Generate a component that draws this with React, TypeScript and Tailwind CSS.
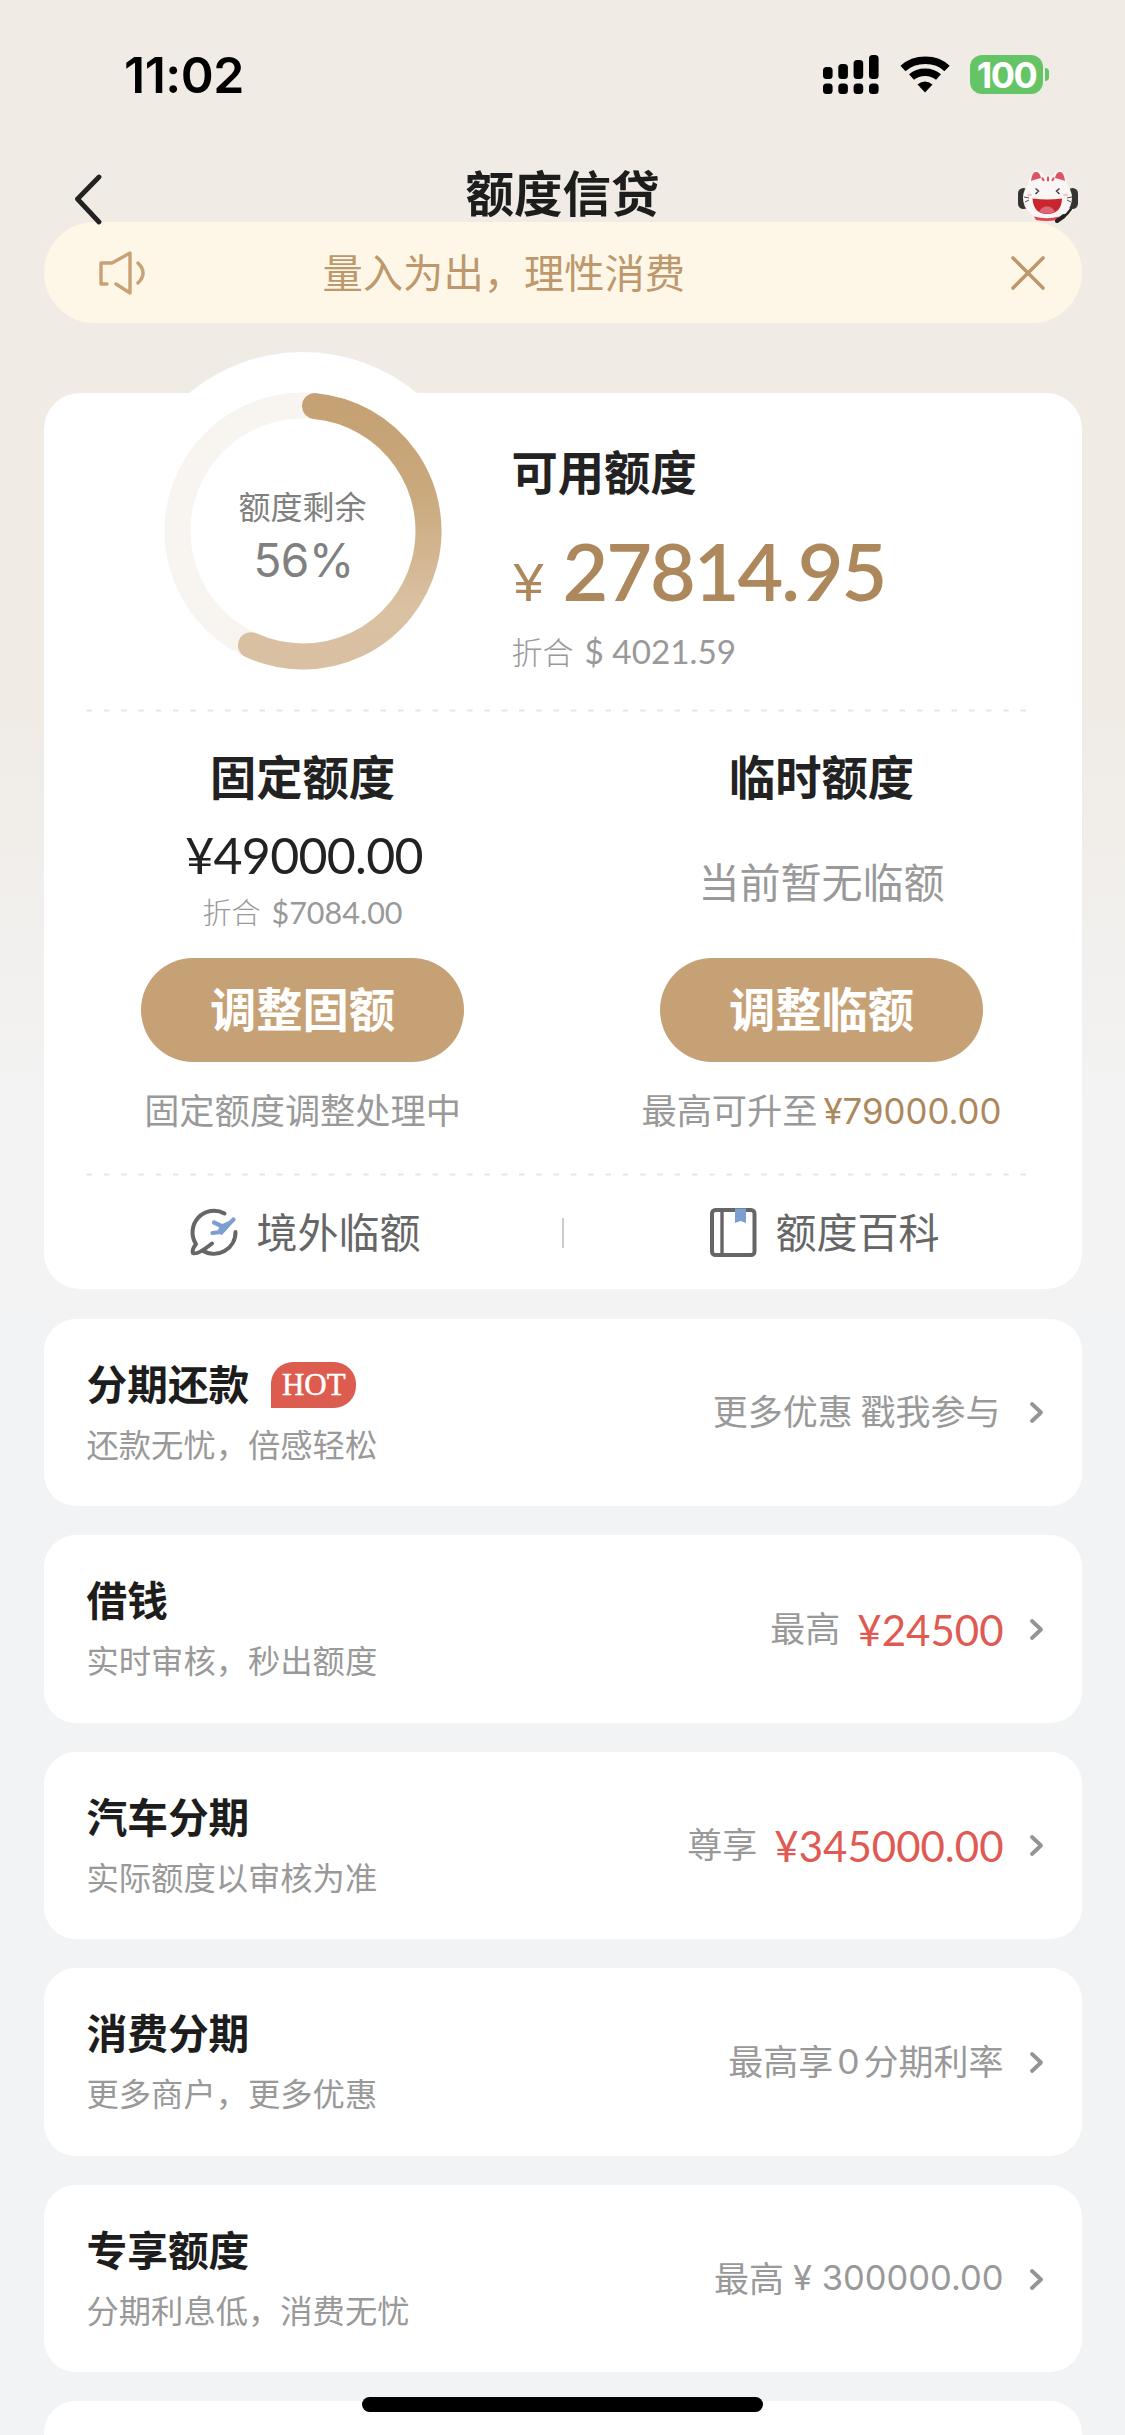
import React from "react";

const CJK = "font-['Noto_Sans_CJK_SC',sans-serif]";
const NUM = "font-['Lato','Noto_Sans_CJK_SC',sans-serif]";

function StatusBar() {
  return (
    <div className="flex h-[150px] items-start justify-between pl-[124px] pr-[76px] pt-[51px]">
      <div className="font-['Inter',sans-serif] text-[50px] font-semibold leading-[48px] tracking-[-0.500px] text-black">
        11:02
      </div>
      <div className="flex items-start pt-[4px]">
        <svg width="58" height="40" viewBox="0 0 58 40" className="mr-[20px]">
          <rect x="1" y="12" width="9.600" height="12" rx="3.500" />
          <rect x="16.300" y="9" width="9.600" height="15" rx="3.500" />
          <rect x="31.600" y="5" width="9.600" height="19" rx="3.500" />
          <rect x="47" y="0" width="9.600" height="24" rx="3.500" />
          <rect x="1" y="28.500" width="9.600" height="10.500" rx="3.500" />
          <rect x="16.300" y="28.500" width="9.600" height="10.500" rx="3.500" />
          <rect x="31.600" y="28.500" width="9.600" height="10.500" rx="3.500" />
          <rect x="47" y="28.500" width="9.600" height="10.500" rx="3.500" />
        </svg>
        <svg width="50" height="40" viewBox="0 0 50 40" className="mr-[20px]" fill="none" stroke="#000">
          <path d="M3 13.500C15 2.500 36 2.500 47 13.500" strokeWidth="7.500" />
          <path d="M11.500 22C19 15.500 31 15.500 38.500 22" strokeWidth="7.500" />
          <path d="M25 37.500L17.500 29.500Q25 23.500 32.500 29.500Z" fill="#000" stroke="none" />
        </svg>
        <div className="flex h-[39px] w-[73px] items-center justify-center rounded-[12px] bg-[#65c466] font-['Inter',sans-serif] text-[36px] font-bold leading-none tracking-[-1.500px] text-white">
          100
        </div>
        <div className="ml-[2px] mt-[13px] h-[13px] w-[4px] rounded-r-full bg-[#65c466]" />
      </div>
    </div>
  );
}

function Mascot() {
  return (
    <svg width="62" height="54" viewBox="0 0 62 54">
      <path d="M45 49Q56 42 57 30" stroke="#222" strokeWidth="2.500" fill="none" />
      <rect x="1" y="19" width="11" height="21" rx="5.500" fill="#333" />
      <rect x="50" y="19" width="11" height="21" rx="5.500" fill="#333" />
      <path d="M11 18Q13 1 19 1Q25 1 27 7Q31 6 36 7Q38 1 43 1Q49 1 50 18Z" fill="#faf6f5" />
      <ellipse cx="30.500" cy="29" rx="24.500" ry="22" fill="#faf6f5" />
      <path d="M14 12Q15 2 20 3Q23 4 24 9Q19 10 14 12Z" fill="#dd5264" />
      <path d="M48 12Q47 2 42 3Q39 4 38 9Q43 10 48 12Z" fill="#dd5264" />
      <path d="M31 8.500V11.500M25.500 9.500L26.500 11M36.500 9.500L35.500 11" stroke="#dd5264" strokeWidth="2.200" strokeLinecap="round" />
      <path d="M18.500 19.500L21.500 22L18.500 25M42.500 19.500L39.500 22L42.500 25" stroke="#444" strokeWidth="1.500" fill="none" />
      <path d="M7 28L12 29M8 33L12 31M55 28L50 29M54 33L50 31" stroke="#555" strokeWidth="1" />
      <ellipse cx="12.500" cy="26" rx="2.500" ry="1.300" fill="#f6c6cc" />
      <ellipse cx="48.500" cy="26" rx="2.500" ry="1.300" fill="#f6c6cc" />
      <path d="M15.500 29.500Q30 31.500 45 29.500Q44.500 45 30 45Q16.500 45 15.500 29.500Z" fill="#c9252d" />
      <path d="M22 43Q25 37 30 37.500Q35 37 38 43Q30 46.500 22 43Z" fill="#dd6677" />
      <path d="M17 47.500Q30 51 42 47.500L40 51Q30 53 19 51Z" fill="#dd4a55" />
      <path d="M40 52L47 47" stroke="#222" strokeWidth="4" strokeLinecap="round" />
    </svg>
  );
}

function Header() {
  return (
    <div className="flex h-[72px] items-start justify-between pl-[72px] pr-[46px]">
      <svg width="34" height="52" viewBox="0 0 34 52" className="mt-[23px]" fill="none">
        <path d="M27 4L5.500 26L27 49" stroke="#222" strokeWidth="4.800" strokeLinecap="round" strokeLinejoin="round" />
      </svg>
      <h1 className={`${CJK} ml-[2px] mt-[6px] text-[48.500px] font-bold leading-[70px] text-[#1d1d1d]`}>额度信贷</h1>
      <div className="mt-[19px]">
        <Mascot />
      </div>
    </div>
  );
}

function Notice() {
  return (
    <div className="flex h-[101px] items-center rounded-full bg-[#fef7e8] pl-[55px] pr-[36px]">
      <svg width="48" height="44" viewBox="0 0 48 44" fill="none" stroke="#c8a274" strokeWidth="3.400" strokeLinejoin="round" strokeLinecap="round">
        <path d="M8 33H2V12H13L31 2V42L17 33" />
        <path d="M39 12Q49 22 39 32" />
      </svg>
      <div className={`${CJK} -mt-[3px] ml-[176px] flex-1 text-[40.300px] leading-[60px] text-[#bd986c]`}>量入为出，理性消费</div>
      <svg width="36" height="36" viewBox="0 0 36 36" stroke="#bd986c" strokeWidth="3.600" strokeLinecap="round">
        <path d="M3 3L33 33M33 3L3 33" />
      </svg>
    </div>
  );
}

function Dashes() {
  return (
    <svg width="942" height="3" className="ml-[42px] block">
      <path d="M0.500 1.500H940" stroke="#e6e6e6" strokeWidth="2" strokeDasharray="5.500 11.800" />
    </svg>
  );
}

function Gauge() {
  const r = 125.5;
  const at = (deg: number) => {
    const a = (deg * Math.PI) / 180;
    return `${160 + r * Math.sin(a)} ${179 - r * Math.cos(a)}`;
  };
  return (
    <svg width="320" height="340" viewBox="0 0 320 340" className="absolute left-[99px] top-[-41px]">
      <defs>
        <linearGradient id="ring" x1="0" y1="0" x2="0" y2="1">
          <stop offset="0" stopColor="#c5a173" />
          <stop offset="0.350" stopColor="#caa97d" />
          <stop offset="0.800" stopColor="#dac1a2" />
          <stop offset="1" stopColor="#d9c0a2" />
        </linearGradient>
      </defs>
      <circle cx="160" cy="179" r="179" fill="#fff" />
      <circle cx="160" cy="179" r={r} fill="none" stroke="#f8f5f0" strokeWidth="26" />
      <path
        d={`M${at(5.5)}A${r} ${r} 0 1 1 ${at(204.5)}`}
        fill="none"
        stroke="url(#ring)"
        strokeWidth="26"
        strokeLinecap="round"
      />
    </svg>
  );
}

function QuotaCard() {
  return (
    <section className="relative h-[896px] rounded-[36px] bg-white">
      <Gauge />
      <div className="relative flex h-[316px]">
        <div className={`${CJK} w-[468px] pl-[50px] pt-[89px] text-center`}>
          <div className="text-[32px] leading-[46px] text-[#808080]">额度剩余</div>
          <div className="ml-[2px] mt-[7px] font-['Inter',sans-serif] text-[46px] leading-[50px] tracking-[-0.500px] text-[#808080]">56%</div>
        </div>
        <div className="pt-[43px]">
          <h2 className={`${CJK} text-[46.300px] font-bold leading-[68px] text-[#222]`}>可用额度</h2>
          <div className="mt-[19px] flex h-[96px] items-baseline text-[#ad885c]">
            <span className="ml-[2px] font-['Liberation_Sans',sans-serif] text-[54px] leading-[96px]">¥</span>
            <span className={`${NUM} ml-[19px] text-[79px] font-semibold leading-[96px] tracking-[-2.100px]`}>27814.95</span>
          </div>
          <div className="mt-[10px] flex h-[44px] items-baseline text-[#999]">
            <span className={`${CJK} text-[31px] font-light leading-[44px]`}>折合</span>
            <span className={`${NUM} ml-[11px] text-[33.300px] leading-[44px]`}>$ 4021.59</span>
          </div>
        </div>
      </div>
      <Dashes />
      <div className="flex h-[461px]">
        <div className="flex w-[518px] flex-col items-center">
          <h3 className={`${CJK} mt-[29px] text-[46.300px] font-bold leading-[68px] text-[#222]`}>固定额度</h3>
          <div className={`${NUM} ml-[3px] mt-[16px] h-[60px] text-[50px] leading-[60px] tracking-[-0.700px] text-[#222]`}>¥49000.00</div>
          <div className="mt-[4px] flex h-[44px] items-baseline text-[#999]">
            <span className={`${CJK} text-[29px] font-light leading-[44px]`}>折合</span>
            <span className={`${NUM} ml-[11px] text-[30.500px] leading-[44px]`}>$7084.00</span>
          </div>
          <button className={`${CJK} mt-[25px] h-[104px] w-[323px] rounded-full bg-[#c7a176] pb-[6px] text-[46.300px] font-bold text-white`}>
            调整固额
          </button>
          <div className={`${CJK} mt-[21px] text-[35.200px] leading-[52px] text-[#999]`}>固定额度调整处理中</div>
        </div>
        <div className="flex flex-1 flex-col items-center">
          <h3 className={`${CJK} mt-[29px] text-[46.300px] font-bold leading-[68px] text-[#222]`}>临时额度</h3>
          <div className={`${CJK} mt-[41px] text-[41px] leading-[60px] text-[#999]`}>当前暂无临额</div>
          <button className={`${CJK} mt-[48px] h-[104px] w-[323px] rounded-full bg-[#c7a176] pb-[6px] text-[46.300px] font-bold text-white`}>
            调整临额
          </button>
          <div className="mt-[21px] flex h-[52px] items-baseline">
            <span className={`${CJK} text-[35.200px] leading-[52px] text-[#999]`}>最高可升至</span>
            <span className="ml-[6px] font-['Inter',sans-serif] text-[34.800px] leading-[52px] text-[#ad885c]">¥79000.00</span>
          </div>
        </div>
      </div>
      <Dashes />
      <div className="flex h-[113px] items-center">
        <div className="flex w-[518px] items-center pl-[144px]">
          <svg width="52" height="52" viewBox="0 0 52 52" fill="none">
            <g stroke="#666" strokeWidth="4" strokeLinecap="round" strokeLinejoin="round">
              <path d="M36.500 6.500A21.500 21.500 0 0 0 8 37Q3.500 43 5 46Q9 48.500 24 36.500" />
              <path d="M47.500 25A21.500 21.500 0 0 1 14.500 43.500" />
            </g>
            <path
              d="M45.500 12.500L33.500 24.500M34.500 19.500L26 15.500M33 25L24.500 26"
              stroke="#7c9fcf"
              strokeWidth="4.200"
              strokeLinecap="round"
            />
            <path d="M32 18L41 14L42 19L34 28L29 26Z" fill="#7c9fcf" />
          </svg>
          <span className={`${CJK} -mt-[6px] ml-[17px] text-[41px] leading-[60px] text-[#666]`}>境外临额</span>
        </div>
        <div className="h-[30px] w-[2px] bg-[#ccc]" />
        <div className="flex items-center pl-[146px]">
          <svg width="48" height="52" viewBox="0 0 48 52" fill="none">
            <rect x="2" y="3" width="42.500" height="45" rx="3.500" stroke="#666" strokeWidth="4" />
            <path d="M12 3V48" stroke="#666" strokeWidth="3.400" />
            <path d="M25 1.500H36V16L30.500 14L25 16Z" fill="#7c9fcf" />
          </svg>
          <span className={`${CJK} -mt-[6px] ml-[18px] text-[41px] leading-[60px] text-[#666]`}>额度百科</span>
        </div>
      </div>
    </section>
  );
}

function Chevron() {
  return (
    <svg width="16" height="24" viewBox="0 0 16 24" fill="none">
      <path d="M3 4L12 12.500L3 21" stroke="#949494" strokeWidth="3.800" strokeLinecap="round" strokeLinejoin="round" />
    </svg>
  );
}

type RowProps = { title: string; sub: string; hot?: boolean; children: React.ReactNode };

function Row({ title, sub, hot, children }: RowProps) {
  return (
    <section className="flex h-[187.600px] shrink-0 justify-between rounded-[32px] bg-white pl-[43px] pr-[37px]">
      <div className="pt-[36px]">
        <div className="flex h-[60px] items-center">
          <h3 className={`${CJK} -mt-[4px] text-[40.700px] font-bold leading-[60px] text-[#1d1d1d]`}>{title}</h3>
          {hot && (
            <span className="ml-[22px] flex h-[46px] w-[85px] items-center justify-center rounded-[22px] rounded-bl-none bg-[#dd5c50] font-['Liberation_Serif',serif] text-[31px] leading-none text-white [-webkit-text-stroke:0.500px_white]">
              HOT
            </span>
          )}
        </div>
        <div className={`${CJK} mt-[6px] text-[32.300px] leading-[44px] text-[#999]`}>{sub}</div>
      </div>
      <div className="flex items-center">
        <div className={`${CJK} -mt-[4px] mr-[25px] flex items-center text-[35px] leading-[52px] text-[#999]`}>{children}</div>
        <Chevron />
      </div>
    </section>
  );
}

function Amount({ children }: { children: React.ReactNode }) {
  return <span className={`${NUM} ml-[17px] mt-[6px] text-[42px] text-[#de5a52]`}>{children}</span>;
}

export default function App() {
  return (
    <div className="relative h-[2435px] w-[1125px] overflow-hidden bg-[#f2f3f5]">
      <div className="absolute inset-x-0 top-0 h-[1317px] bg-[linear-gradient(180deg,#f0ebe5_0,#f0ebe5_700px,#f3f3f3_1100px,#f3f3f3_100%)]" />
      <div className="relative">
        <StatusBar />
        <Header />
        <main className="px-[43.500px]">
          <Notice />
          <div className="h-[70px]" />
          <QuotaCard />
          <div className="mt-[29.500px] flex flex-col gap-[29px]">
            <Row title="分期还款" sub="还款无忧，倍感轻松" hot>
              <span className="mr-[3px]">更多优惠 戳我参与</span>
            </Row>
            <Row title="借钱" sub="实时审核，秒出额度">
              最高<Amount>¥24500</Amount>
            </Row>
            <Row title="汽车分期" sub="实际额度以审核为准">
              尊享<Amount>¥345000.00</Amount>
            </Row>
            <Row title="消费分期" sub="更多商户，更多优惠">
              最高享<span className={`${NUM} mx-[5px]`}>0</span>分期利率
            </Row>
            <Row title="专享额度" sub="分期利息低，消费无忧">
              最高<span className="ml-[9px] mt-[2px] font-['Inter',sans-serif] text-[34.500px]">¥ 300000.00</span>
            </Row>
            <div className="h-[188px] shrink-0 rounded-[32px] bg-white" />
          </div>
        </main>
      </div>
      <div className="absolute bottom-[23px] left-[362px] h-[15px] w-[401px] rounded-full bg-black" />
    </div>
  );
}
